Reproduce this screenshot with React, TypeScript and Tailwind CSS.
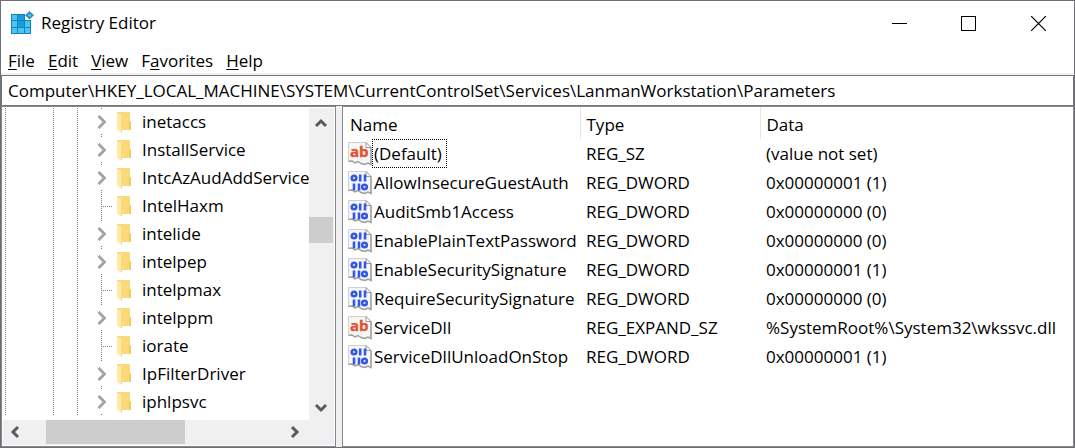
import { useState } from 'react';

interface TreeKey {
    name: string;
    hasChildren: boolean;
}

type ValueKind = 'string' | 'binary';

interface RegistryValue {
    name: string;
    type: string;
    data: string;
    kind: ValueKind;
}

const TREE_KEYS: TreeKey[] = [
    { name: 'inetaccs', hasChildren: true },
    { name: 'InstallService', hasChildren: true },
    { name: 'IntcAzAudAddService', hasChildren: true },
    { name: 'IntelHaxm', hasChildren: false },
    { name: 'intelide', hasChildren: true },
    { name: 'intelpep', hasChildren: true },
    { name: 'intelpmax', hasChildren: false },
    { name: 'intelppm', hasChildren: true },
    { name: 'iorate', hasChildren: false },
    { name: 'IpFilterDriver', hasChildren: true },
    { name: 'iphlpsvc', hasChildren: true },
];

const VALUES: RegistryValue[] = [
    { name: '(Default)', type: 'REG_SZ', data: '(value not set)', kind: 'string' },
    { name: 'AllowInsecureGuestAuth', type: 'REG_DWORD', data: '0x00000001 (1)', kind: 'binary' },
    { name: 'AuditSmb1Access', type: 'REG_DWORD', data: '0x00000000 (0)', kind: 'binary' },
    { name: 'EnablePlainTextPassword', type: 'REG_DWORD', data: '0x00000000 (0)', kind: 'binary' },
    { name: 'EnableSecuritySignature', type: 'REG_DWORD', data: '0x00000001 (1)', kind: 'binary' },
    { name: 'RequireSecuritySignature', type: 'REG_DWORD', data: '0x00000000 (0)', kind: 'binary' },
    { name: 'ServiceDll', type: 'REG_EXPAND_SZ', data: '%SystemRoot%\\System32\\wkssvc.dll', kind: 'string' },
    { name: 'ServiceDllUnloadOnStop', type: 'REG_DWORD', data: '0x00000001 (1)', kind: 'binary' },
];

// [before, accelerator, after]
const MENUS: [string, string, string][] = [
    ['', 'F', 'ile'],
    ['', 'E', 'dit'],
    ['', 'V', 'iew'],
    ['F', 'a', 'vorites'],
    ['', 'H', 'elp'],
];

function RegistryIcon() {
    return (
        <svg width="24" height="24" viewBox="0 0 24 24" aria-hidden="true">
            <path d="M0 3h14v6h6v14H0z" fill="#1383bd" />
            <path
                d="M1 4h5v5H1zM1 10h5v6H1zM1 17h5v5H1zM7 17h6v5H7zM14 17h5v5h-5zM14 10h5v6h-5z"
                fill="#4cc5f4"
            />
            <path d="M7 4h6v5H7zM7 10h6v6H7z" fill="#11a0dc" />
            <path d="M18.5 0l4.5 4.2-4.5 4.3L14 4.2z" fill="#2f8cba" />
            <path d="M18.5 2.2l2.2 2-2.2 2.1-2.2-2.1z" fill="#58b9e2" />
        </svg>
    );
}

function FolderIcon() {
    return (
        <svg width="14" height="21" viewBox="0 0 14 21" className="shrink-0" aria-hidden="true">
            <path d="M0 0h13v9l1 1v8H0z" fill="#f9d978" />
            <path d="M13 9l1 1v8h-2v-8z" fill="#f2cb5d" />
            <path d="M0 0l5 3v18l-5-3z" fill="#ffe9a6" />
            <path d="M4.5 3v17" stroke="#f5d98a" />
        </svg>
    );
}

function ValueIcon({ kind }: { kind: ValueKind }) {
    return (
        <svg width="24" height="24" viewBox="0 0 24 24" className="shrink-0" aria-hidden="true">
            <path
                d="M.5.5H18L23 5.500V22.500l-3-1.500-3 1.500-4-1-3-2-3 1.500-3-2-3.500.5z"
                fill="#f6f6f6"
                stroke="#d0d0d0"
            />
            <path
                d="M23 5.500V22.500l-3-1.500-3 1.500-4-1-3-2-3 1.500-3-2-3.500.5"
                fill="none"
                stroke="#a0a0a0"
                strokeWidth="1.5"
            />
            <path d="M18 .5v5h5z" fill="#fff" stroke="#9a9a9a" />
            {kind === 'string' ? (
                <text
                    x="2"
                    y="15"
                    fill="#dd5533"
                    stroke="#dd5533"
                    strokeWidth=".4"
                    className="font-['Open_Sans'] text-[15px] font-bold"
                >
                    ab
                </text>
            ) : (
                <g fill="none" stroke="#3558e0" strokeWidth="2.6">
                    <ellipse cx="6" cy="7" rx="2.3" ry="2.2" />
                    <path d="M12.200 3.500v7M17 3.500v7M6 12.500v7M11 12.500v7" />
                    <ellipse cx="16.5" cy="16" rx="2.3" ry="2.2" />
                </g>
            )}
        </svg>
    );
}

const ARROW_POINTS = {
    up: '2,10 7,5 12,10',
    down: '2,4 7,9 12,4',
    left: '10,2 5,7 10,12',
    right: '4,2 9,7 4,12',
};

function ScrollButton({ direction }: { direction: keyof typeof ARROW_POINTS }) {
    return (
        <button
            type="button"
            aria-label={`Scroll ${direction}`}
            className="flex size-6 shrink-0 items-center justify-center"
        >
            <svg width="14" height="14" viewBox="0 0 14 14">
                <polyline
                    points={ARROW_POINTS[direction]}
                    fill="none"
                    stroke="#5a5a5a"
                    strokeWidth="3"
                />
            </svg>
        </button>
    );
}

function TitleBar() {
    return (
        <header className="flex h-11 items-center justify-between">
            <div className="flex items-center gap-[6px] pl-[10px]">
                <RegistryIcon />
                <h1>Registry Editor</h1>
            </div>
            <div className="flex h-full">
                <button type="button" aria-label="Minimize" className="flex w-[69px] items-center justify-center">
                    <svg width="15" height="15" shapeRendering="crispEdges">
                        <path d="M0 7.5h15" stroke="#000" />
                    </svg>
                </button>
                <button type="button" aria-label="Maximize" className="flex w-[69px] items-center justify-center">
                    <svg width="15" height="15" shapeRendering="crispEdges">
                        <rect x=".5" y=".5" width="14" height="14" fill="none" stroke="#000" />
                    </svg>
                </button>
                <button type="button" aria-label="Close" className="flex w-[71px] items-center justify-center">
                    <svg width="15" height="15">
                        <path d="M0 0l15 15M15 0L0 15" stroke="#000" strokeWidth="1.2" />
                    </svg>
                </button>
            </div>
        </header>
    );
}

function MenuBar() {
    return (
        <nav className="flex h-[28px] items-end gap-[13px] pl-[7px]">
            {MENUS.map(([before, key, after]) => (
                <button key={before + key + after} type="button">
                    {before}
                    <span className="underline decoration-1 underline-offset-2">{key}</span>
                    {after}
                </button>
            ))}
        </nav>
    );
}

function GuideLine() {
    return (
        <span className="block h-full w-px bg-[repeating-linear-gradient(to_bottom,#808080_0_1px,transparent_1px_2px)]" />
    );
}

function TreeRow({ item }: { item: TreeKey }) {
    return (
        <li className="flex h-7 items-center">
            <span className="ml-[2px] w-12 shrink-0 self-stretch">
                <GuideLine />
            </span>
            <span className="w-6 shrink-0 self-stretch">
                <GuideLine />
            </span>
            <span className="w-6 shrink-0 self-stretch">
                <GuideLine />
            </span>
            <span className="relative w-4 shrink-0 self-stretch">
                <GuideLine />
                {item.hasChildren ? (
                    <button
                        type="button"
                        aria-label={`Expand ${item.name}`}
                        className="absolute top-[2px] -left-[5px] flex h-6 w-3 items-center justify-center bg-white"
                    >
                        <svg width="10" height="14" viewBox="0 0 10 14">
                            <polyline points="1.5,1 7.5,7 1.5,13" fill="none" stroke="#a3a3a3" strokeWidth="2.8" />
                        </svg>
                    </button>
                ) : (
                    <span className="absolute top-[14px] left-0 h-px w-[11px] bg-[repeating-linear-gradient(to_right,#808080_0_1px,transparent_1px_2px)]" />
                )}
            </span>
            <FolderIcon />
            <button type="button" className="ml-[11px] whitespace-nowrap">
                {item.name}
            </button>
        </li>
    );
}

function TreePane() {
    return (
        <aside className="flex w-[335px] shrink-0 flex-col border border-[#828790] p-px">
            <div className="flex grow">
                <div className="min-w-0 grow overflow-hidden">
                    <ul className="pb-1">
                        {TREE_KEYS.map((item) => (
                            <TreeRow key={item.name} item={item} />
                        ))}
                    </ul>
                </div>
                <div className="flex w-[25px] shrink-0 flex-col bg-[#f0f0f0] pt-[3px]">
                    <ScrollButton direction="up" />
                    <div className="grow-[7]" />
                    <div className="h-[26px] w-6 bg-[#cdcdcd]" />
                    <div className="grow-[13]" />
                    <ScrollButton direction="down" />
                </div>
            </div>
            <div className="flex h-[25px] bg-[#f0f0f0] pr-[27px]">
                <div className="w-[43px] shrink-0">
                    <ScrollButton direction="left" />
                </div>
                <div className="h-6 w-[139px] bg-[#cdcdcd]" />
                <div className="grow" />
                <ScrollButton direction="right" />
            </div>
        </aside>
    );
}

function ValuePane() {
    const [selected, setSelected] = useState('(Default)');

    return (
        <section className="min-w-0 grow border border-r-0 border-[#828790]">
            <table className="w-full table-fixed border-collapse text-left whitespace-nowrap">
                <colgroup>
                    <col className="w-[237px]" />
                    <col className="w-[180px]" />
                    <col />
                </colgroup>
                <thead>
                    <tr className="h-8">
                        <th className="border-r border-[#e5e5e5] pt-1 pl-[7px] font-normal">Name</th>
                        <th className="border-r border-[#e5e5e5] pt-1 pl-[6px] font-normal">Type</th>
                        <th className="pt-1 pl-[6px] font-normal">Data</th>
                    </tr>
                </thead>
                <tbody>
                    {VALUES.map((value) => (
                        <tr key={value.name} className="h-[29px]" onClick={() => setSelected(value.name)}>
                            <td className="p-0 pl-[5px]">
                                <div className="flex items-center">
                                    <ValueIcon kind={value.kind} />
                                    <span
                                        className={
                                            value.name === selected
                                                ? 'h-[29px] border border-dotted border-black pr-1 pl-px leading-[27px]'
                                                : 'h-[29px] border border-transparent pl-px leading-[27px]'
                                        }
                                    >
                                        {value.name}
                                    </span>
                                </div>
                            </td>
                            <td className="p-0 pl-[6px]">{value.type}</td>
                            <td className="p-0 pl-[6px]">{value.data}</td>
                        </tr>
                    ))}
                </tbody>
            </table>
        </section>
    );
}

export default function App() {
    const [path, setPath] = useState(
        'Computer\\HKEY_LOCAL_MACHINE\\SYSTEM\\CurrentControlSet\\Services\\LanmanWorkstation\\Parameters'
    );

    return (
        <div className="flex min-h-screen flex-col border border-[#6f6f73] bg-white font-['Open_Sans',sans-serif] text-[17px] leading-6 text-black">
            <TitleBar />
            <MenuBar />
            <div className="bg-[#f0f0f0] pt-[2px]">
                <input
                    type="text"
                    aria-label="Address"
                    value={path}
                    onChange={(e) => setPath(e.target.value)}
                    className="block h-[31px] w-full border border-[#76767c] bg-white pl-[6px] outline-none"
                />
            </div>
            <main className="flex grow gap-[6px] border-r border-[#828790] bg-[#f0f0f0] *:bg-white">
                <TreePane />
                <ValuePane />
            </main>
        </div>
    );
}
